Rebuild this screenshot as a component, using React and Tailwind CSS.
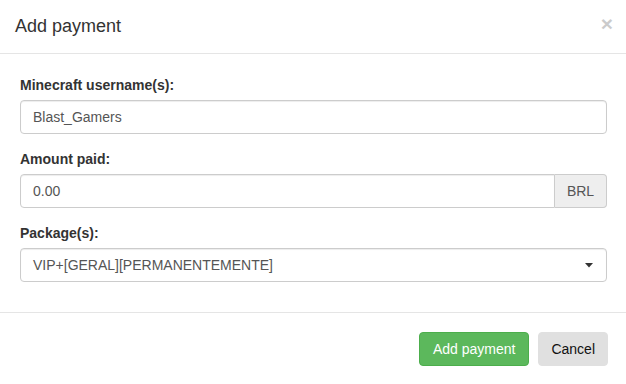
import React from "react";

const font = { fontFamily: '"Liberation Sans", Arial, sans-serif' };

function Field({ label, children }) {
  return (
    <div className="mb-[15px]">
      <label className="block mb-[5px] text-[14px] leading-[20px] font-bold text-[#333]">{label}</label>
      {children}
    </div>
  );
}

export default function App() {
  const inputCls =
    "h-[34px] w-full border border-[#ccc] px-[12px] text-[14px] text-[#555] flex items-center bg-white shadow-[inset_0_1px_1px_rgba(0,0,0,0.075)]";

  return (
    <div className="w-[626px] h-[384px] bg-white overflow-hidden" style={font}>
      {/* header */}
      <div className="h-[54px] border-b border-[#e5e5e5] flex items-center justify-between pl-[15px] pr-[13px]">
        <h4 className="text-[18px] leading-[26px] text-[#333] -mt-[1px]">Add payment</h4>
        <span className="text-[21px] font-bold leading-none text-black opacity-20 -mt-[6px]">×</span>
      </div>

      {/* body */}
      <div className="pt-[21px] pl-[20px] pr-[19px] pb-[15px]">
        <Field label="Minecraft username(s):">
          <div className={inputCls + " rounded-[4px]"}>Blast_Gamers</div>
        </Field>

        <Field label="Amount paid:">
          <div className="flex">
            <div className={inputCls + " rounded-l-[4px]"}>0.00</div>
            <div className="h-[34px] w-[52px] shrink-0 border border-l-0 border-[#ccc] bg-[#eee] rounded-r-[4px] flex items-center justify-center text-[14px] text-[#555]">
              BRL
            </div>
          </div>
        </Field>

        <Field label="Package(s):">
          <div className={inputCls + " rounded-[4px] justify-between"}>
            <span>VIP+[GERAL][PERMANENTEMENTE]</span>
            <svg width="8" height="5" viewBox="0 0 8 5" className="mr-[1px]">
              <path d="M0 0 H8 L4 4.5 Z" fill="#333" />
            </svg>
          </div>
        </Field>
      </div>

      {/* footer */}
      <div className="border-t border-[#e5e5e5] pt-[19px] pr-[18px] flex justify-end gap-[9px]">
        <button className="h-[34px] px-[13px] rounded-[4px] bg-[#5cb85c] border border-[#4cae4c] text-white text-[14px]">
          Add payment
        </button>
        <button className="h-[34px] px-[12px] rounded-[4px] bg-[#e0e0e0] border border-[#e0e0e0] text-[#111] text-[14px]">
          Cancel
        </button>
      </div>
    </div>
  );
}
